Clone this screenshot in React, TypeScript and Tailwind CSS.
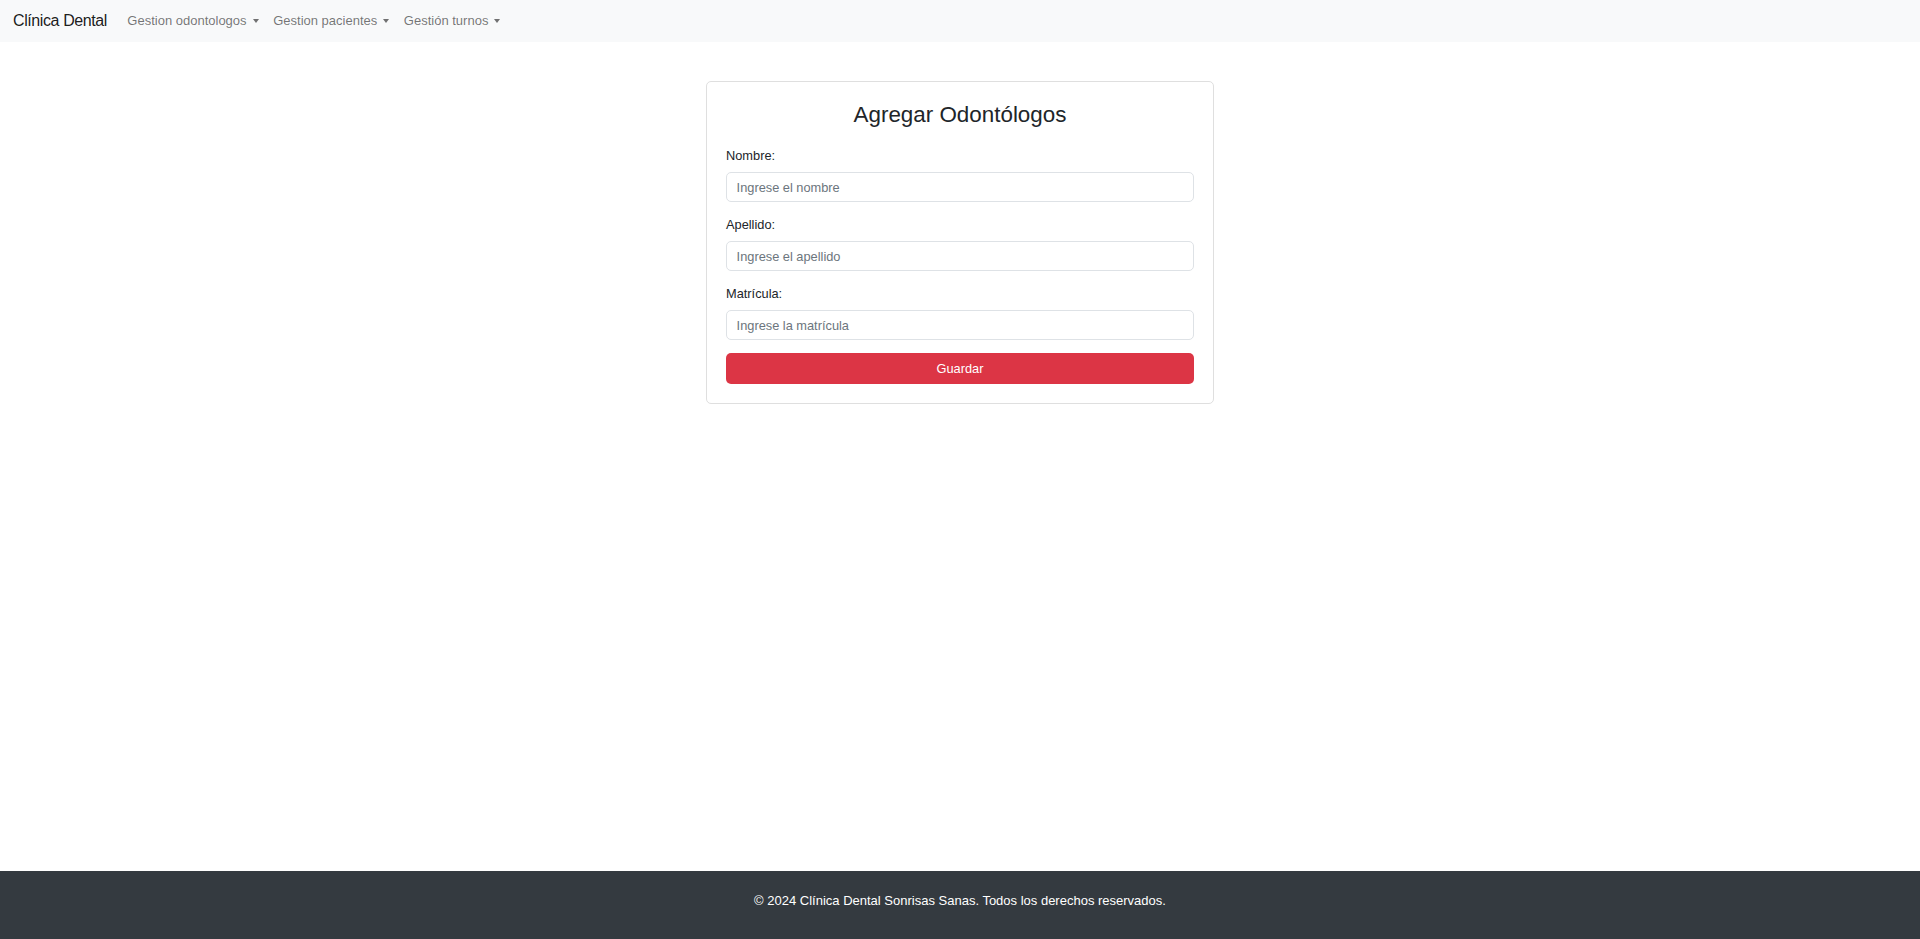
const menus = ['Gestion odontologos', 'Gestion pacientes', 'Gestión turnos']

const fields = [
  { label: 'Nombre:', placeholder: 'Ingrese el nombre' },
  { label: 'Apellido:', placeholder: 'Ingrese el apellido' },
  { label: 'Matrícula:', placeholder: 'Ingrese la matrícula' },
]

function Navbar() {
  return (
    <nav className="h-[42px] bg-[#f8f9fa] flex items-center pl-[13px]">
      <a href="#" className="text-[16px] tracking-[-0.4px] text-black/90 mr-[13px]">
        Clínica Dental
      </a>
      <ul className="flex items-center">
        {menus.map((m) => (
          <li key={m}>
            <a href="#" className="flex items-center px-[7.3px] text-[13px] text-black/55">
              {m}
              <span className="ml-[6px] w-0 h-0 border-t-[4px] border-t-black/55 border-x-[3.5px] border-x-transparent" />
            </a>
          </li>
        ))}
      </ul>
    </nav>
  )
}

function OdontologoForm() {
  return (
    <div className="w-[508px] mx-auto mt-[39px] border border-[#dfdfdf] rounded-[5px] bg-white p-[19px]">
      <h3 className="text-[22.4px] leading-[27px] font-medium text-[#212529] text-center mb-[18px]">
        Agregar Odontólogos
      </h3>
      <form onSubmit={(e) => e.preventDefault()}>
        {fields.map((f) => (
          <div key={f.label} className="mb-[13px]">
            <label className="block text-[12.8px] leading-[19px] text-[#212529] mb-[7px]">{f.label}</label>
            <input
              type="text"
              placeholder={f.placeholder}
              className="block w-full h-[30px] px-[9.6px] text-[12.8px] text-[#212529] placeholder:text-[#6c757d] border border-[#dee2e6] rounded-[5px] outline-none"
            />
          </div>
        ))}
        <button
          type="submit"
          className="w-full h-[31px] bg-[#dc3545] text-white text-[12.8px] rounded-[5px]"
        >
          Guardar
        </button>
      </form>
    </div>
  )
}

export default function App() {
  return (
    <div className="min-h-screen flex flex-col bg-white font-['Liberation_Sans',Arial,sans-serif]">
      <Navbar />
      <main className="flex-1">
        <OdontologoForm />
      </main>
      <footer className="h-[68px] bg-[#343a40] text-white text-center pt-[20px]">
        <p className="text-[13px] leading-[19px]">© 2024 Clínica Dental Sonrisas Sanas. Todos los derechos reservados.</p>
      </footer>
    </div>
  )
}
